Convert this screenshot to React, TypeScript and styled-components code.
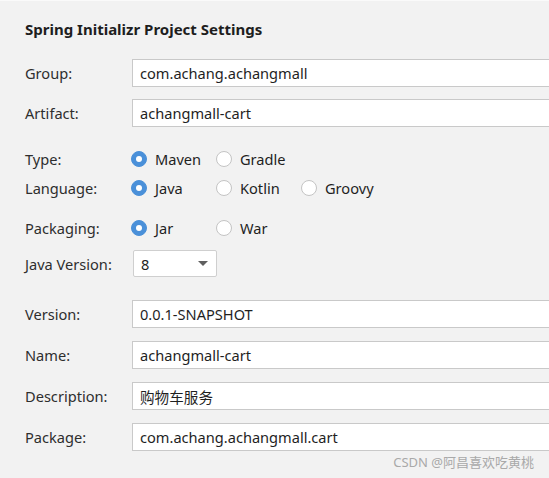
import React from "react";
import styled, { createGlobalStyle } from "styled-components";

const Global = createGlobalStyle`
  html, body {
    margin: 0;
    padding: 0;
    background: #f2f2f2;
  }
  body {
    font-family: "Noto Sans", "Noto Sans CJK SC", sans-serif;
    color: #2b2b2b;
  }
`;

const Page = styled.div`
  position: relative;
  width: 549px;
  height: 478px;
  overflow: hidden;
  padding: 20px 0 0 25px;
  box-sizing: border-box;
  background: #f2f2f2;
  box-shadow: inset 0 1px 0 #fafafa;
`;

const Title = styled.h1`
  margin: 0;
  font-size: 15px;
  font-weight: 700;
  line-height: 19px;
  height: 19px;
  color: #1e1e1e;
`;

const Row = styled.div<{ $top: number; $h?: number }>`
  display: grid;
  grid-template-columns: 107px 1fr;
  align-items: center;
  margin-top: ${(p) => p.$top}px;
  height: ${(p) => p.$h ?? 28}px;
`;

const Label = styled.label`
  font-size: 14.6px;
  color: #2e2e2e;
  white-space: nowrap;
`;

const TextBox = styled.div`
  height: 28px;
  box-sizing: border-box;
  margin-right: -2px;
  border: 1px solid #c9c9c9;
  background: #ffffff;
  padding: 0 7px;
  display: flex;
  align-items: center;
  font-size: 14.6px;
  color: #1f1f1f;
  white-space: nowrap;
`;

const Options = styled.div`
  display: flex;
  align-items: center;
  margin-left: -1px;
`;

const Option = styled.div`
  width: 85px;
  display: flex;
  align-items: center;
  gap: 8px;
  font-size: 14.6px;
  color: #1f1f1f;
  white-space: nowrap;
`;

const Radio = styled.span<{ $on?: boolean }>`
  width: 16px;
  height: 16px;
  border-radius: 50%;
  box-sizing: border-box;
  flex: none;
  display: flex;
  align-items: center;
  justify-content: center;
  background: ${(p) => (p.$on ? "#4a90d9" : "#ffffff")};
  border: 1px solid ${(p) => (p.$on ? "#4a90d9" : "#c4c4c4")};
  &::after {
    content: "";
    display: ${(p) => (p.$on ? "block" : "none")};
    width: 6px;
    height: 6px;
    border-radius: 50%;
    background: #ffffff;
  }
`;

const Select = styled.div`
  width: 84px;
  height: 27px;
  margin-left: 1px;
  box-sizing: border-box;
  border: 1px solid #cfcfcf;
  border-radius: 2px;
  background: #ffffff;
  display: flex;
  align-items: center;
  justify-content: space-between;
  padding: 0 8px 0 7px;
  font-size: 14.6px;
  color: #1f1f1f;
`;

const Caret = styled.span`
  width: 0;
  height: 0;
  border-left: 5px solid transparent;
  border-right: 5px solid transparent;
  border-top: 5px solid #5f5f5f;
`;

const Watermark = styled.div`
  position: absolute;
  right: 15px;
  bottom: 7px;
  font-size: 13px;
  color: #a9a9a9;
  white-space: nowrap;
`;

type Opt = { label: string; on?: boolean };

const RadioRow = ({ label, top, opts }: { label: string; top: number; opts: Opt[] }) => (
  <Row $top={top} $h={20}>
    <Label>{label}</Label>
    <Options>
      {opts.map((o) => (
        <Option key={o.label}>
          <Radio $on={o.on} />
          {o.label}
        </Option>
      ))}
    </Options>
  </Row>
);

const TextRow = ({ label, top, value }: { label: string; top: number; value: string }) => (
  <Row $top={top}>
    <Label>{label}</Label>
    <TextBox>{value}</TextBox>
  </Row>
);

export default function App() {
  return (
    <>
      <Global />
      <Page>
        <Title>Spring Initializr Project Settings</Title>
        <TextRow label="Group:" top={20} value="com.achang.achangmall" />
        <TextRow label="Artifact:" top={12} value="achangmall-cart" />
        <RadioRow label="Type:" top={22} opts={[{ label: "Maven", on: true }, { label: "Gradle" }]} />
        <RadioRow
          label="Language:"
          top={9}
          opts={[{ label: "Java", on: true }, { label: "Kotlin" }, { label: "Groovy" }]}
        />
        <RadioRow label="Packaging:" top={20} opts={[{ label: "Jar", on: true }, { label: "War" }]} />
        <Row $top={12} $h={27}>
          <Label>Java Version:</Label>
          <Select>
            8
            <Caret />
          </Select>
        </Row>
        <TextRow label="Version:" top={23} value="0.0.1-SNAPSHOT" />
        <TextRow label="Name:" top={13} value="achangmall-cart" />
        <TextRow label="Description:" top={13} value="购物车服务" />
        <TextRow label="Package:" top={13} value="com.achang.achangmall.cart" />
        <Watermark>CSDN @阿昌喜欢吃黄桃</Watermark>
      </Page>
    </>
  );
}
